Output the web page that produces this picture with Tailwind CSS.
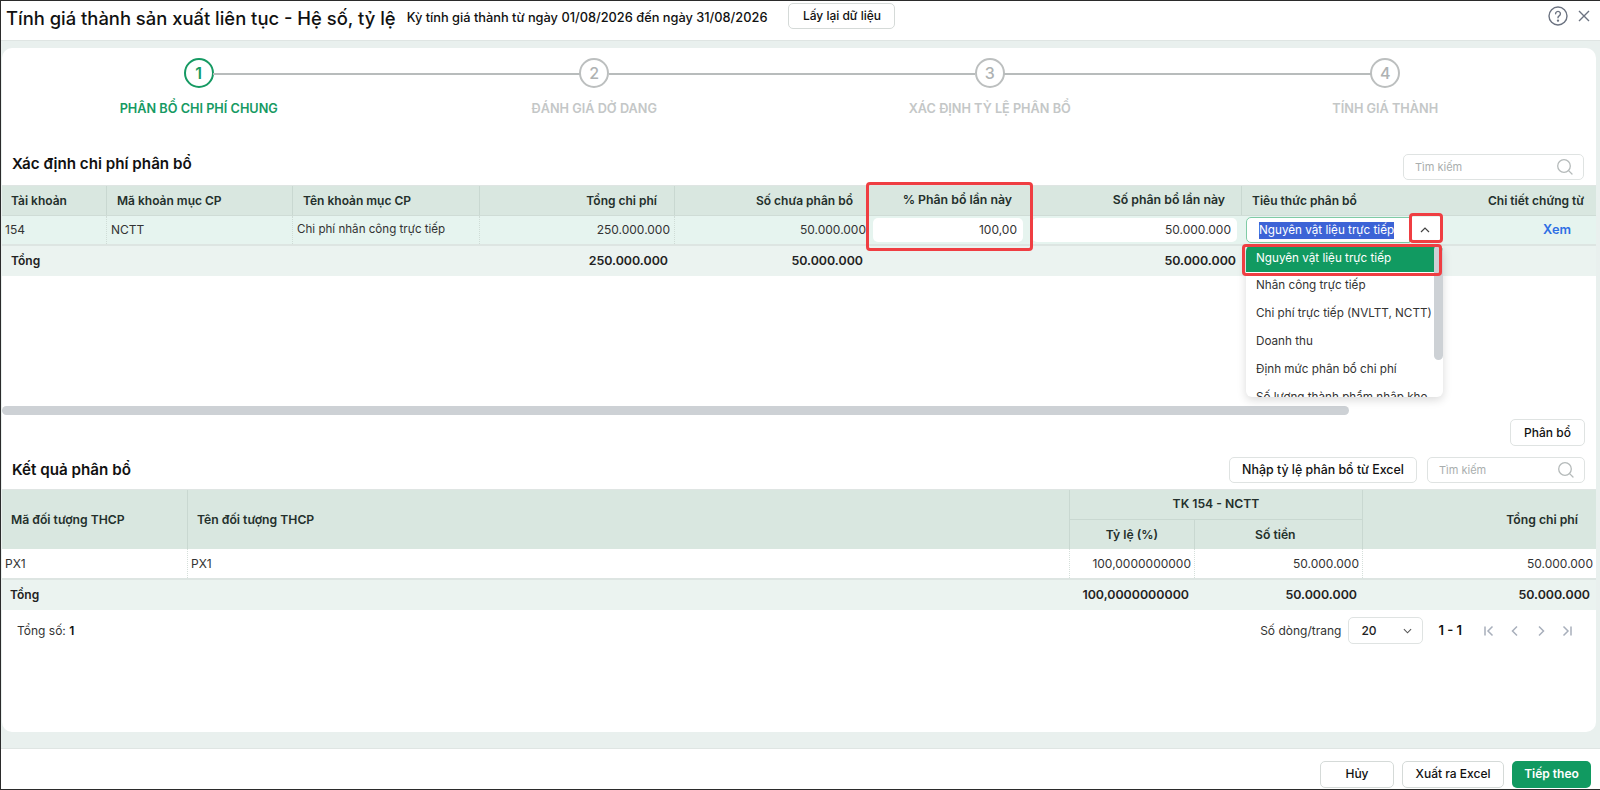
<!DOCTYPE html>
<html><head><meta charset="utf-8">
<script src="https://cdn.jsdelivr.net/npm/@tailwindcss/browser@4"></script>
</head>
<body class="m-0 bg-white">
<div class="relative w-[1600px] h-[790px] overflow-hidden flex flex-col bg-white border-t border-l border-b border-[#2b2b2b] font-['Inter',sans-serif] text-[12px] text-[#1f2937]">

<header class="h-[39px] shrink-0 flex items-center pl-[5px] pr-[10px] bg-white">
  <h1 class="text-[18.4px] font-medium text-[#111] whitespace-nowrap -mt-[3px]">Tính giá thành sản xuất liên tục - Hệ số, tỷ lệ</h1>
  <span class="ml-[11px] text-[12.8px] font-medium text-[#111] whitespace-nowrap -mt-[6px]">Kỳ tính giá thành từ ngày 01/08/2026 đến ngày 31/08/2026</span>
  <button class="ml-[21px] h-[26px] w-[107px] border border-[#d5dad8] rounded-[5px] text-[12px] font-medium bg-white text-[#111] -mt-[9px]">Lấy lại dữ liệu</button>
  <div class="ml-auto flex items-center gap-[10px] -mt-[9px]">
    <svg class="w-[20px] h-[20px]" viewBox="0 0 20 20" fill="none" stroke="#6b7280" stroke-width="1.4"><circle cx="10" cy="10" r="9"/><path d="M7.6 7.8a2.4 2.4 0 1 1 3.6 2.1c-.8.5-1.2 1-1.2 1.9" stroke-linecap="round"/><circle cx="10" cy="14.6" r=".5" fill="#6b7280"/></svg>
    <svg class="w-[12px] h-[12px]" viewBox="0 0 12 12" fill="none" stroke="#6b7280" stroke-width="1.4"><path d="M1 1l10 10M11 1L1 11"/></svg>
  </div>
</header>

<div class="flex-1 flex flex-col bg-[#e9f0ee] border-t border-[#dfe5e3] pt-[7px] pr-[4px] pl-[1px] min-h-0">
  <main class="h-[684px] shrink-0 bg-white rounded-[10px] flex flex-col overflow-hidden">
    <!-- stepper -->
    <div class="flex w-[1582px] h-[105px] shrink-0 pt-[10px] -ml-[1px]">
      <div class="w-[396px] relative flex flex-col items-center">
        <div class="absolute top-[15px] left-[212px] w-[184px] h-[2px] bg-[#b8bcbc]"></div>
        <div class="w-[30px] h-[30px] rounded-full border-2 border-[#169a63] text-[#169a63] flex items-center justify-center text-[16px] font-semibold">1</div>
        <div class="mt-[11px] text-[12.7px] font-semibold text-[#169a63] whitespace-nowrap">PHÂN BỔ CHI PHÍ CHUNG</div>
      </div>
      <div class="w-[396px] relative flex flex-col items-center">
        <div class="absolute top-[15px] left-0 w-[183px] h-[2px] bg-[#b8bcbc]"></div>
        <div class="absolute top-[15px] left-[212px] w-[184px] h-[2px] bg-[#b8bcbc]"></div>
        <div class="w-[30px] h-[30px] rounded-full border-2 border-[#bcbfbf] text-[#aeb2b2] flex items-center justify-center text-[16px] font-medium">2</div>
        <div class="mt-[11px] text-[12.7px] font-semibold text-[#c4c7c7] whitespace-nowrap">ĐÁNH GIÁ DỞ DANG</div>
      </div>
      <div class="w-[396px] relative flex flex-col items-center">
        <div class="absolute top-[15px] left-0 w-[183px] h-[2px] bg-[#b8bcbc]"></div>
        <div class="absolute top-[15px] left-[212px] w-[184px] h-[2px] bg-[#b8bcbc]"></div>
        <div class="w-[30px] h-[30px] rounded-full border-2 border-[#bcbfbf] text-[#aeb2b2] flex items-center justify-center text-[16px] font-medium">3</div>
        <div class="mt-[11px] text-[12.7px] font-semibold text-[#c4c7c7] whitespace-nowrap">XÁC ĐỊNH TỶ LỆ PHÂN BỔ</div>
      </div>
      <div class="w-[396px] relative flex flex-col items-center">
        <div class="absolute top-[15px] left-0 w-[183px] h-[2px] bg-[#b8bcbc]"></div>
        <div class="w-[30px] h-[30px] rounded-full border-2 border-[#bcbfbf] text-[#aeb2b2] flex items-center justify-center text-[16px] font-medium">4</div>
        <div class="mt-[11px] text-[12.7px] font-semibold text-[#c4c7c7] whitespace-nowrap">TÍNH GIÁ THÀNH</div>
      </div>
    </div>

    <!-- section 1 title -->
    <div class="h-[30px] shrink-0 flex items-center justify-between pl-[10px] pr-[12px] -mt-[1px]">
      <h2 class="text-[15.2px] font-semibold text-[#111] -mt-[6px]">Xác định chi phí phân bổ</h2>
      <div class="w-[181px] h-[26px] border border-[#dfe3e2] rounded-[5px] flex items-center justify-between pl-[11px] pr-[9px] text-[11px] text-[#a9aeae]">
        <span>Tìm kiếm</span>
        <svg class="w-[18px] h-[18px]" viewBox="0 0 18 18" fill="none" stroke="#b5baba" stroke-width="1.3"><circle cx="8" cy="8" r="6.3"/><path d="M12.6 12.6l3.4 3.4" stroke-linecap="round"/></svg>
      </div>
    </div>

    <!-- table 1 -->
    <div class="mt-[3px] shrink-0 w-[1594px]">
      <div class="grid grid-cols-[105px_186px_187px_195px_192px_162px_213px_1fr] h-[30px] bg-[#d9e7e0] border-t border-[#dfe5e3] font-semibold text-[#24302c] items-center">
        <div class="h-full flex items-center pl-[9px] border-r border-[#c9d8d1]">Tài khoản</div>
        <div class="h-full flex items-center pl-[10px] border-r border-[#c9d8d1]">Mã khoản mục CP</div>
        <div class="h-full flex items-center pl-[10px] border-r border-[#c9d8d1]">Tên khoản mục CP</div>
        <div class="h-full flex items-center justify-end pr-[17px] border-r border-[#c9d8d1]">Tổng chi phí</div>
        <div class="h-full flex items-center justify-end pr-[14px]">Số chưa phân bổ</div>
        <div class="h-full flex items-center justify-end pr-[17px] text-[12.3px]">% Phân bổ lần này</div>
        <div class="h-full flex items-center justify-end pr-[16px] border-r border-[#c9d8d1] text-[12.3px]">Số phân bổ lần này</div>
        <div class="h-full flex items-center justify-between pl-[10px] pr-[12px]"><span>Tiêu thức phân bổ</span><span>Chi tiết chứng từ</span></div>
      </div>
      <div class="grid grid-cols-[105px_186px_187px_195px_192px_162px_213px_1fr] h-[31px] bg-[#e6f4ef] border-t border-[#cfdcd6] border-b-2 border-b-[#dde5e2] items-center text-[#333]">
        <div class="h-full flex items-center pl-[3px] border-r border-dotted border-[#cfdcd6]">154</div>
        <div class="h-full flex items-center pl-[4px] border-r border-dotted border-[#cfdcd6]">NCTT</div>
        <div class="h-full flex items-center pl-[4px] border-r border-dotted border-[#cfdcd6] text-[11.6px]">Chi phí nhân công trực tiếp</div>
        <div class="h-full flex items-center justify-end pr-[4px] border-r border-dotted border-[#cfdcd6]">250.000.000</div>
        <div class="h-full flex items-center justify-end pr-[1px]">50.000.000</div>
        <div class="h-full flex items-center px-[6px]"><div class="w-full h-[24px] bg-white rounded-[5px] flex items-center justify-end pr-[6px]">100,00</div></div>
        <div class="h-full flex items-center pl-[3px] pr-[5px]"><div class="w-full h-[24px] bg-white rounded-[5px] flex items-center justify-end pr-[6px]">50.000.000</div></div>
        <div class="h-full flex items-center pl-[4px] relative">
          <div class="w-[164px] h-[26px] bg-white border border-[#7fcba6] rounded-l-[5px] flex items-center pl-[12px] shrink-0"><span class="bg-[#3c63d6] text-white h-[17px] leading-[17px] whitespace-nowrap text-[11.7px]">Nguyên vật liệu trực tiếp</span></div>
          <div class="w-[30px] h-[26px] bg-white flex items-center justify-center shrink-0"><svg class="w-[10px] h-[6px]" viewBox="0 0 10 6" fill="none" stroke="#444" stroke-width="1.2"><path d="M1 5l4-4 4 4"/></svg></div>
          <a class="ml-auto mr-[25px] text-[#2f6fe4] font-semibold text-[12.8px]">Xem</a>
        </div>
      </div>
      <div class="grid grid-cols-[105px_186px_187px_195px_192px_162px_213px_1fr] h-[30px] bg-[#ebf3f0] items-center font-semibold text-[#222] text-[12.4px]">
        <div class="pl-[9px] text-[12px]">Tổng</div><div></div><div></div>
        <div class="text-right pr-[7px]">250.000.000</div>
        <div class="text-right pr-[4px]">50.000.000</div>
        <div></div>
        <div class="text-right pr-[6px]">50.000.000</div>
        <div></div>
      </div>
    </div>

    <div class="h-[139px] shrink-0 flex flex-col justify-end">
      <div class="h-[9px] w-[1347px] rounded-full bg-[#cdd1d5]"></div>
    </div>

    <div class="h-[27px] mt-[4px] shrink-0 flex justify-end pr-[11px]">
      <button class="w-[75px] h-[27px] border border-[#dfe3e2] rounded-[5px] bg-white font-medium text-[#111]">Phân bổ</button>
    </div>

    <div class="h-[26px] mt-[11px] shrink-0 flex items-center pl-[10px] pr-[11px]">
      <h2 class="text-[15.2px] font-semibold text-[#111]">Kết quả phân bổ</h2>
      <button class="ml-auto w-[188px] h-[26px] border border-[#dfe3e2] rounded-[5px] bg-white font-medium text-[#111] text-[12.4px]">Nhập tỷ lệ phân bổ từ Excel</button>
      <div class="ml-[10px] w-[158px] h-[26px] border border-[#dfe3e2] rounded-[5px] flex items-center justify-between pl-[11px] pr-[9px] text-[11px] text-[#a9aeae]">
        <span>Tìm kiếm</span>
        <svg class="w-[18px] h-[18px]" viewBox="0 0 18 18" fill="none" stroke="#b5baba" stroke-width="1.3"><circle cx="8" cy="8" r="6.3"/><path d="M12.6 12.6l3.4 3.4" stroke-linecap="round"/></svg>
      </div>
    </div>

    <!-- table 2 -->
    <div class="mt-[6px] shrink-0 w-[1594px]">
      <div class="grid grid-cols-[186px_882px_125px_168px_1fr] grid-rows-[30px_30px] h-[60px] bg-[#d9e7e0] border-t border-[#dfe5e3] font-semibold text-[#24302c] text-[12.2px]">
        <div class="row-span-2 flex items-center pl-[9px] border-r border-[#c9d8d1]">Mã đối tượng THCP</div>
        <div class="row-span-2 flex items-center pl-[9px] border-r border-[#c9d8d1]">Tên đối tượng THCP</div>
        <div class="col-span-2 flex items-center justify-center border-b border-r border-[#c9d8d1]">TK 154 - NCTT</div>
        <div class="row-span-2 flex items-center justify-end pr-[18px]">Tổng chi phí</div>
        <div class="flex items-center justify-center border-r border-[#c9d8d1]">Tỷ lệ (%)</div>
        <div class="flex items-center pl-[60px] border-r border-[#c9d8d1]">Số tiền</div>
      </div>
      <div class="grid grid-cols-[186px_882px_125px_168px_1fr] h-[31px] bg-white border-b-2 border-[#dde5e2] items-center text-[#333]">
        <div class="h-full flex items-center pl-[3px] border-r border-dotted border-[#d5dfda]">PX1</div>
        <div class="h-full flex items-center pl-[3px] border-r border-dotted border-[#d5dfda]">PX1</div>
        <div class="h-full flex items-center justify-end pr-[3px] border-r border-dotted border-[#d5dfda]">100,0000000000</div>
        <div class="h-full flex items-center justify-end pr-[3px] border-r border-dotted border-[#d5dfda]">50.000.000</div>
        <div class="h-full flex items-center justify-end pr-[3px]">50.000.000</div>
      </div>
      <div class="grid grid-cols-[186px_882px_125px_168px_1fr] h-[30px] bg-[#ebf3f0] items-center font-semibold text-[#222] text-[12.4px]">
        <div class="pl-[8px] text-[12px]">Tổng</div><div></div>
        <div class="text-right pr-[6px]">100,0000000000</div>
        <div class="text-right pr-[6px]">50.000.000</div>
        <div class="text-right pr-[6px]">50.000.000</div>
      </div>
    </div>

    <!-- pagination -->
    <div class="h-[27px] mt-[7px] shrink-0 flex items-center pl-[15px] pr-[23px] text-[#333]">
      <span>Tổng số: <b class="font-semibold text-[#111]">1</b></span>
      <span class="ml-auto">Số dòng/trang</span>
      <div class="ml-[7px] w-[75px] h-[27px] border border-[#dfe3e2] rounded-[5px] flex items-center justify-between pl-[12px] pr-[10px] text-[#222]">
        <span class="font-medium">20</span>
        <svg class="w-[9px] h-[6px]" viewBox="0 0 10 6" fill="none" stroke="#555" stroke-width="1.2"><path d="M1 1l4 4 4-4"/></svg>
      </div>
      <span class="ml-[15px] font-semibold text-[#111] text-[13px]">1 - 1</span>
      <div class="ml-[21px] flex items-center gap-[14px]">
        <svg class="w-[12px] h-[12px]" viewBox="0 0 12 12" fill="none" stroke="#a8afbb" stroke-width="1.5"><path d="M2 1.5v9M9.5 1.5L5 6l4.500 4.500"/></svg>
        <svg class="w-[12px] h-[12px]" viewBox="0 0 12 12" fill="none" stroke="#a8afbb" stroke-width="1.5"><path d="M8 1.500L3.500 6 8 10.500"/></svg>
        <svg class="w-[12px] h-[12px]" viewBox="0 0 12 12" fill="none" stroke="#a8afbb" stroke-width="1.5"><path d="M4 1.500L8.500 6 4 10.500"/></svg>
        <svg class="w-[12px] h-[12px]" viewBox="0 0 12 12" fill="none" stroke="#a8afbb" stroke-width="1.5"><path d="M10 1.500v9M2.500 1.500L7 6l-4.500 4.500"/></svg>
      </div>
    </div>
  </main>
</div>

<footer class="h-[41px] shrink-0 bg-white border-t border-[#dfe5e3] flex items-center justify-end gap-[8px] pr-[9px] pt-[10px]">
  <button class="w-[74px] h-[27px] border border-[#d5dad8] rounded-[5px] bg-white font-medium text-[#111]">Hủy</button>
  <button class="w-[102px] h-[27px] border border-[#d5dad8] rounded-[5px] bg-white font-medium text-[#111]">Xuất ra Excel</button>
  <button class="w-[79px] h-[27px] rounded-[5px] bg-[#119a61] font-semibold text-white">Tiếp theo</button>
</footer>

<!-- dropdown panel -->
<div class="absolute left-[1245px] top-[244px] w-[197px] h-[152px] bg-white rounded-[6px] shadow-[0_3px_10px_rgba(0,0,0,0.15)] overflow-hidden text-[11.7px] text-[#333]">
  <div class="h-[27px] bg-[#119a61] text-white flex items-center pl-[10px]">Nguyên vật liệu trực tiếp</div>
  <div class="h-[28px] flex items-center pl-[10px] whitespace-nowrap">Nhân công trực tiếp</div>
  <div class="h-[28px] flex items-center pl-[10px] whitespace-nowrap">Chi phí trực tiếp (NVLTT, NCTT)</div>
  <div class="h-[28px] flex items-center pl-[10px] whitespace-nowrap">Doanh thu</div>
  <div class="h-[28px] flex items-center pl-[10px] whitespace-nowrap">Định mức phân bổ chi phí</div>
  <div class="h-[28px] flex items-center pl-[10px] whitespace-nowrap">Số lượng thành phẩm nhập kho</div>
  <div class="absolute right-0 top-0 w-[9px] h-[115px] rounded-full bg-[#cdd1d5]"></div>
</div>
<!-- annotation boxes -->
<div class="absolute left-[865px] top-[181px] w-[167px] h-[69px] border-[3px] border-[#ef3e42] rounded-[4px]"></div>
<div class="absolute left-[1408px] top-[212px] w-[34px] h-[30px] border-[3px] border-[#ef3e42] rounded-[4px]"></div>
<div class="absolute left-[1241px] top-[243px] w-[200px] h-[32px] border-[3px] border-[#ef3e42] rounded-[4px]"></div>
</div>
</body></html>
